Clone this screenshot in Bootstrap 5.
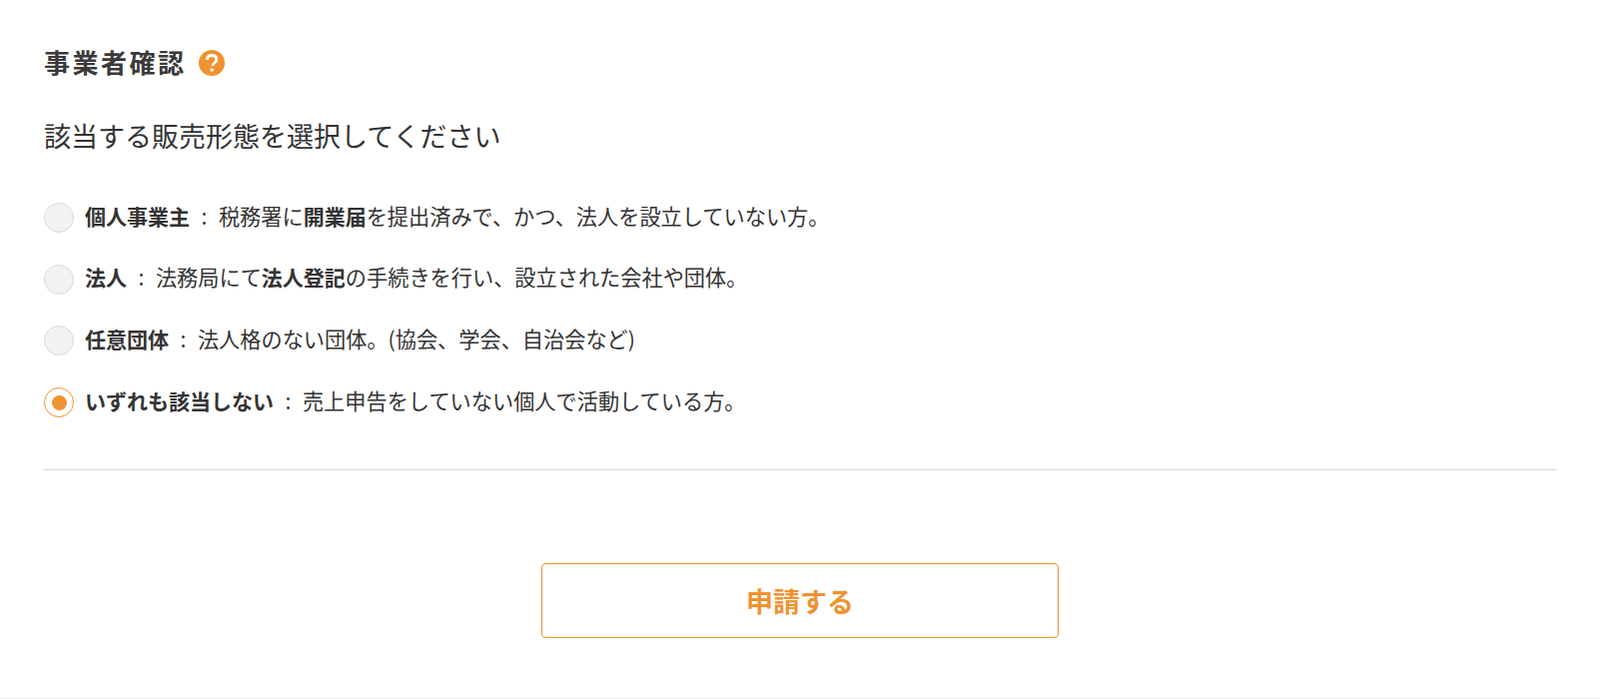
<!DOCTYPE html>
<html lang="ja">
<head>
<meta charset="utf-8">
<title>事業者確認</title>
<link rel="stylesheet" href="https://cdn.jsdelivr.net/npm/bootstrap@5.3.0/dist/css/bootstrap.min.css">
<style>
html, body { height: 700px; overflow: hidden; }
body { font-family: "Noto Sans CJK JP", "Liberation Sans", sans-serif; color: #333; background: #fff; }
.shell { height: 700px; padding: 43px 44px 0; border-bottom: 1px solid #f2f2f2; }
.head-line { gap: 12px; height: 40px; }
.head-title { font-size: 26px; font-weight: 700; letter-spacing: 2.5px; line-height: 40px; margin: 0; padding-bottom: 2px; color: #3a3a3a; }
.help-dot { width: 26px; height: 26px; flex: none; display: block; }
.sub-title { font-size: 27px; font-weight: 400; line-height: 40px; margin: 33px 0 0; color: #333; }
.opts { margin-top: 47px; gap: 31.7px; }
.opt { height: 30px; gap: 11px; font-size: 21.2px; line-height: 30px; margin: 0; cursor: pointer; }
.opt b { font-size: 21px; }
.opt input { position: absolute; opacity: 0; }
.opt-text { padding-bottom: 5px; }
.dot { width: 30px; height: 30px; flex: none; border-radius: 50%; border: 1px solid #d9d9d9; background: #f3f2f1; display: flex; align-items: center; justify-content: center; }
.opt input:checked + .dot { background: #fff; border-color: #f0922f; }
.opt input:checked + .dot::after { content: ""; width: 15px; height: 15px; border-radius: 50%; background: #ef9433; }
.sep { margin: 0 11.500px; }
.rule { margin: 52px 0 0; border-color: #d6d6d6; opacity: 1; }
.submit-wrap { margin-top: 93px; }
.submit-btn { width: 518px; height: 75px; border: 1px solid #f0922f; border-radius: 4px; background: #fff; color: #f0922f; font-size: 27px; font-weight: 700; padding: 2px 0 0; }
.submit-btn:hover { background: #fff; color: #f0922f; border-color: #f0922f; }
</style>
</head>
<body>
<main class="shell">
  <div class="d-flex align-items-center head-line">
    <h1 class="head-title">事業者確認</h1>
    <svg class="help-dot" viewBox="0 0 26 26" aria-hidden="true">
      <circle cx="13" cy="13" r="13" fill="#f0922f"/>
      <path d="M8.300 10c0-2.800 2-4.500 4.800-4.500 2.800 0 4.700 1.600 4.700 4 0 1.900-1 2.800-2.300 3.700-1.100.8-1.500 1.300-1.500 2.700" fill="none" stroke="#fff" stroke-width="2.800"/>
      <circle cx="13.200" cy="20" r="1.800" fill="#fff"/>
    </svg>
  </div>
  <h2 class="sub-title">該当する販売形態を選択してください</h2>
  <form class="d-flex flex-column opts">
    <label class="d-flex align-items-center opt"><input type="radio" name="kind"><span class="dot"></span><span class="opt-text"><b>個人事業主</b><span class="sep">:</span>税務署に<b>開業届</b>を提出済みで、かつ、法人を設立していない方。</span></label>
    <label class="d-flex align-items-center opt"><input type="radio" name="kind"><span class="dot"></span><span class="opt-text"><b>法人</b><span class="sep">:</span>法務局にて<b>法人登記</b>の手続きを行い、設立された会社や団体。</span></label>
    <label class="d-flex align-items-center opt"><input type="radio" name="kind"><span class="dot"></span><span class="opt-text"><b>任意団体</b><span class="sep">:</span>法人格のない団体。(協会、学会、自治会など)</span></label>
    <label class="d-flex align-items-center opt"><input type="radio" name="kind" checked><span class="dot"></span><span class="opt-text"><b>いずれも該当しない</b><span class="sep">:</span>売上申告をしていない個人で活動している方。</span></label>
  </form>
  <hr class="rule">
  <div class="d-flex justify-content-center submit-wrap">
    <button type="button" class="btn submit-btn">申請する</button>
  </div>
</main>
</body>
</html>
